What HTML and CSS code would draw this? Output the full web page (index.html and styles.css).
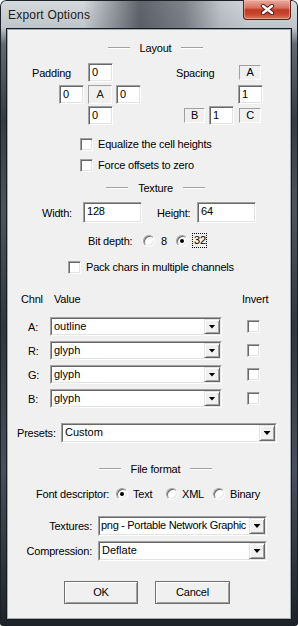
FILE: index.html
```html
<!DOCTYPE html>
<html lang="en">

<head>
  <meta charset="UTF-8" />
  <meta name="viewport" content="width=device-width, initial-scale=1.0" />
  <title>Export Options</title>
  <link rel="stylesheet" href="styles.css">
</head>

<body>
  <div class="window">
    <div class="titlebar">
      <span class="title">Export Options</span>
      <div class="close">
        <svg width="15" height="11" viewBox="0 0 15 11">
          <path d="M3 2 L12 9 M12 2 L3 9" stroke="#4a1d16" stroke-width="4.2" stroke-linecap="round" fill="none" />
          <path d="M3 2 L12 9 M12 2 L3 9" stroke="#ffffff" stroke-width="2.4" stroke-linecap="round" fill="none" />
        </svg>
      </div>
    </div>

    <div class="client">
      <!-- layout -->
      <div class="heading layout-head"><span class="rule"></span><span>Layout</span><span class="rule"></span></div>

      <div class="row row1">
        <span class="pad-lbl">Padding</span>
        <span class="edit small">0</span>
        <span class="sp-lbl">Spacing</span>
        <span class="tag">A</span>
      </div>
      <div class="row row2">
        <span class="edit small pad-left">0</span>
        <span class="tag big">A</span>
        <span class="edit small pad-right">0</span>
        <span class="edit small sp-mid">1</span>
      </div>
      <div class="row row3">
        <span class="edit small pad-bottom">0</span>
        <span class="tag sp-b">B</span>
        <span class="edit small sp-one">1</span>
        <span class="tag sp-c">C</span>
      </div>

      <div class="check-row cb1"><span class="checkbox"></span>Equalize the cell heights</div>
      <div class="check-row cb2"><span class="checkbox"></span>Force offsets to zero</div>

      <!-- texture -->
      <div class="heading texture-head"><span class="rule"></span><span>Texture</span><span class="rule"></span></div>

      <div class="row size-row">
        <span class="w-lbl">Width:</span>
        <span class="edit wide">128</span>
        <span class="h-lbl">Height:</span>
        <span class="edit wide">64</span>
      </div>

      <div class="row depth-row">
        <span class="depth-lbl">Bit depth:</span>
        <span class="radio"></span>
        <span class="opt-8">8</span>
        <span class="radio checked"></span>
        <span class="focus">32</span>
      </div>

      <div class="check-row pack"><span class="checkbox"></span>Pack chars in multiple channels</div>

      <div class="row chnl-head">
        <span class="chnl">Chnl</span>
        <span class="value">Value</span>
        <span class="invert">Invert</span>
      </div>

      <div class="row chan first">
        <span class="chan-lbl">A:</span>
        <div class="combo chan-combo"><div class="combo-in"><span class="combo-text">outline</span><span class="drop"></span></div></div>
        <span class="checkbox inv"></span>
      </div>
      <div class="row chan">
        <span class="chan-lbl">R:</span>
        <div class="combo chan-combo"><div class="combo-in"><span class="combo-text">glyph</span><span class="drop"></span></div></div>
        <span class="checkbox inv"></span>
      </div>
      <div class="row chan">
        <span class="chan-lbl">G:</span>
        <div class="combo chan-combo"><div class="combo-in"><span class="combo-text">glyph</span><span class="drop"></span></div></div>
        <span class="checkbox inv"></span>
      </div>
      <div class="row chan">
        <span class="chan-lbl">B:</span>
        <div class="combo chan-combo"><div class="combo-in"><span class="combo-text">glyph</span><span class="drop"></span></div></div>
        <span class="checkbox inv"></span>
      </div>

      <div class="row presets">
        <span class="presets-lbl">Presets:</span>
        <div class="combo presets-combo"><div class="combo-in"><span class="combo-text">Custom</span><span class="drop"></span></div></div>
      </div>

      <!-- file format -->
      <div class="heading format-head"><span class="rule"></span><span>File format</span><span class="rule"></span></div>

      <div class="row desc-row">
        <span class="desc-lbl">Font descriptor:</span>
        <span class="radio checked"></span>
        <span class="opt-text">Text</span>
        <span class="radio"></span>
        <span class="opt-xml">XML</span>
        <span class="radio"></span>
        <span class="opt-bin">Binary</span>
      </div>

      <div class="row file-row textures">
        <span class="file-lbl">Textures:</span>
        <div class="combo file-combo"><div class="combo-in"><span class="combo-text tight">png - Portable Network Graphic</span><span class="drop"></span></div></div>
      </div>
      <div class="row file-row compression">
        <span class="file-lbl">Compression:</span>
        <div class="combo file-combo"><div class="combo-in"><span class="combo-text">Deflate</span><span class="drop"></span></div></div>
      </div>

      <div class="row buttons">
        <span class="btn ok">OK</span>
        <span class="btn cancel">Cancel</span>
      </div>
    </div>
  </div>
</body>

</html>
```

FILE: styles.css
```css
* {
  padding: 0;
  margin: 0;
  box-sizing: border-box;
}

body {
  width: 298px;
  height: 626px;
  overflow: hidden;
  background: #ffffff;
  font-family: "Liberation Sans", Arial, sans-serif;
  font-size: 11px;
  letter-spacing: -0.2px;
  color: #000;
}

/* window frame */
.window {
  width: 298px;
  height: 626px;
  display: flex;
  flex-direction: column;
  border-radius: 6px 6px 3px 3px;
  box-shadow: inset 0 0 0 1px #1c2127;
  background:
    linear-gradient(to right, rgba(0, 0, 0, 0) 28%, rgba(55, 61, 70, 0.75) 47%, rgba(70, 76, 86, 0.6) 62%, rgba(150, 156, 163, 0.35) 74%, rgba(0, 0, 0, 0) 84%) top / 100% 29px no-repeat,
    linear-gradient(to bottom, #d6dadd 0, #bfc5ca 28px, #626970 44px, #353b42 120px, #4d545d 210px, #30363d 330px, #46505c 470px, #1d2228 626px);
}

.titlebar {
  height: 29px;
  display: flex;
  align-items: flex-start;
  padding-left: 8px;
}

.title {
  line-height: 30px;
  font-size: 12px;
  letter-spacing: 0.2px;
  color: #1b1b1b;
}

.close {
  margin-left: auto;
  margin-right: 7px;
  width: 48px;
  height: 20px;
  display: flex;
  align-items: center;
  justify-content: center;
  border: 1px solid #5a2119;
  border-top: none;
  border-radius: 0 0 4px 4px;
  background: linear-gradient(to bottom, #e9aa9c 0, #d77463 40%, #c13b24 52%, #c64630 75%, #dd7a5f 100%);
  box-shadow: inset 0 0 0 1px rgba(255, 210, 200, 0.45);
}

.client {
  margin: 0 7px;
  height: 590px;
  background: #f0f0f0;
  border: 1px solid #a4acb3;
  box-shadow: 0 0 0 1px #161b21;
}

.row {
  display: flex;
  align-items: center;
}

/* group headings */
.heading {
  height: 14px;
  display: flex;
  align-items: center;
  justify-content: center;
  gap: 10px;
  padding-left: 13px;
}

.rule {
  width: 22px;
  height: 2px;
  border-top: 1px solid #a0a0a0;
  border-bottom: 1px solid #ffffff;
}

.layout-head { margin-top: 11px; }
.texture-head { margin-top: 9px; }
.format-head { margin-top: 19px; }

/* sunken boxes */
.edit {
  display: block;
  background: #fff;
  border: 1px solid;
  border-color: #a0a0a0 #ffffff #ffffff #a0a0a0;
  box-shadow: inset 1px 1px 0 #696969, inset -1px -1px 0 #e3e3e3;
  padding-left: 3px;
}

.edit.small {
  width: 25px;
  height: 19px;
  line-height: 17px;
}

.edit.wide {
  width: 59px;
  height: 21px;
  line-height: 17px;
}

.tag {
  width: 22px;
  height: 15px;
  line-height: 13px;
  text-align: center;
  border: 1px solid;
  border-color: #a0a0a0 #ffffff #ffffff #a0a0a0;
}

.tag.big {
  width: 24px;
  height: 19px;
  line-height: 17px;
  margin-left: 4px;
  color: #222;
}

.row1, .row2, .row3 { height: 19px; }
.row1 { margin-top: 8px; }
.row2 { margin-top: 3px; }
.row3 { margin-top: 2px; }

.pad-lbl { margin-left: 24px; width: 56px; }
.sp-lbl { margin-left: 63px; width: 63px; }
.pad-left { margin-left: 51px; }
.pad-right { margin-left: 4px; }
.sp-mid { margin-left: 97px; }
.pad-bottom { margin-left: 80px; }
.sp-b { margin-left: 71px; width: 21px; }
.sp-one { margin-left: 4px; }
.sp-c { margin-left: 5px; }

/* checkboxes */
.check-row {
  height: 14px;
  display: flex;
  align-items: center;
  gap: 5px;
}

.checkbox {
  width: 13px;
  height: 13px;
  flex: none;
  background: #fff;
  border: 1px solid;
  border-color: #a0a0a0 #ffffff #ffffff #a0a0a0;
  box-shadow: inset 1px 1px 0 #696969, inset -1px -1px 0 #e3e3e3;
}

.cb1 { margin-top: 12px; padding-left: 72px; }
.cb2 { margin-top: 7px; padding-left: 72px; }
.pack { margin-top: 12px; padding-left: 60px; }

/* radios */
.radio {
  width: 12px;
  height: 12px;
  flex: none;
  border-radius: 50%;
  background: #fff;
  border: 1px solid;
  border-color: #a0a0a0 #ffffff #ffffff #a0a0a0;
  box-shadow: inset 1px 1px 0 #696969, inset -1px -1px 0 #e3e3e3;
  display: flex;
  align-items: center;
  justify-content: center;
}

.radio.checked::after {
  content: "";
  width: 4px;
  height: 4px;
  border-radius: 50%;
  background: #000;
}

/* texture */
.size-row { margin-top: 7px; height: 21px; }
.w-lbl { margin-left: 34px; width: 41px; }
.h-lbl { margin-left: 15px; width: 40px; }

.depth-row { margin-top: 10px; height: 15px; }
.depth-lbl { margin-left: 80px; width: 55px; }
.opt-8 { margin-left: 6px; width: 15px; }
.focus {
  margin-left: 4px;
  width: 15px;
  height: 15px;
  line-height: 13px;
  padding-left: 1px;
  border: 1px dotted #000;
}

/* channels */
.chnl-head { margin-top: 18px; height: 14px; }
.chnl { margin-left: 13px; width: 33px; }
.value { width: 188px; }

.chan { margin-top: 5px; height: 19px; }
.chan.first { margin-top: 11px; }
.chan-lbl { margin-left: 20px; width: 22px; }
.chan-combo { width: 172px; height: 19px; }
.inv { margin-left: 25px; }

.combo {
  border: 1px solid;
  border-color: #a0a0a0 #ffffff #ffffff #a0a0a0;
  letter-spacing: 0;
}

.combo-in {
  height: 100%;
  display: flex;
  background: #fff;
  border: 1px solid;
  border-color: #696969 #e3e3e3 #e3e3e3 #696969;
}

.combo-text {
  flex: 1;
  min-width: 0;
  overflow: hidden;
  white-space: nowrap;
  padding-left: 2px;
  line-height: 15px;
}

.combo-text.tight {
  letter-spacing: -0.3px;
  padding-left: 1px;
}

.drop {
  width: 16px;
  flex: none;
  display: flex;
  align-items: center;
  justify-content: center;
  background: #f0f0f0;
  border: 1px solid;
  border-color: #e3e3e3 #696969 #696969 #e3e3e3;
  box-shadow: inset 1px 1px 0 #ffffff, inset -1px -1px 0 #a0a0a0;
}

.drop::after {
  content: "";
  width: 7px;
  height: 4px;
  background: #000;
  clip-path: polygon(0 0, 100% 0, 50% 100%);
}

.presets { margin-top: 15px; height: 20px; }
.presets-lbl { margin-left: 9px; width: 44px; }
.presets-combo { width: 216px; height: 20px; }

/* file format */
.desc-row { margin-top: 11px; height: 14px; }
.desc-lbl { margin-left: 28px; width: 80px; }
.opt-text { margin-left: 5px; width: 33px; }
.opt-xml { margin-left: 4px; width: 31px; }
.opt-bin { margin-left: 5px; }

.file-row { height: 20px; }
.textures { margin-top: 15px; }
.compression { margin-top: 5px; }
.file-lbl { width: 84px; text-align: right; margin-right: 6px; }
.file-combo { width: 169px; height: 20px; }

/* buttons */
.buttons { margin-top: 20px; height: 23px; }

.btn {
  height: 23px;
  line-height: 21px;
  text-align: center;
  background: #f0f0f0;
  border: 1px solid #6f6f6f;
  box-shadow: inset 1px 1px 0 #ffffff, inset -1px -1px 0 #a0a0a0;
}

.ok { margin-left: 56px; width: 74px; }
.cancel { margin-left: 17px; width: 75px; }
```
